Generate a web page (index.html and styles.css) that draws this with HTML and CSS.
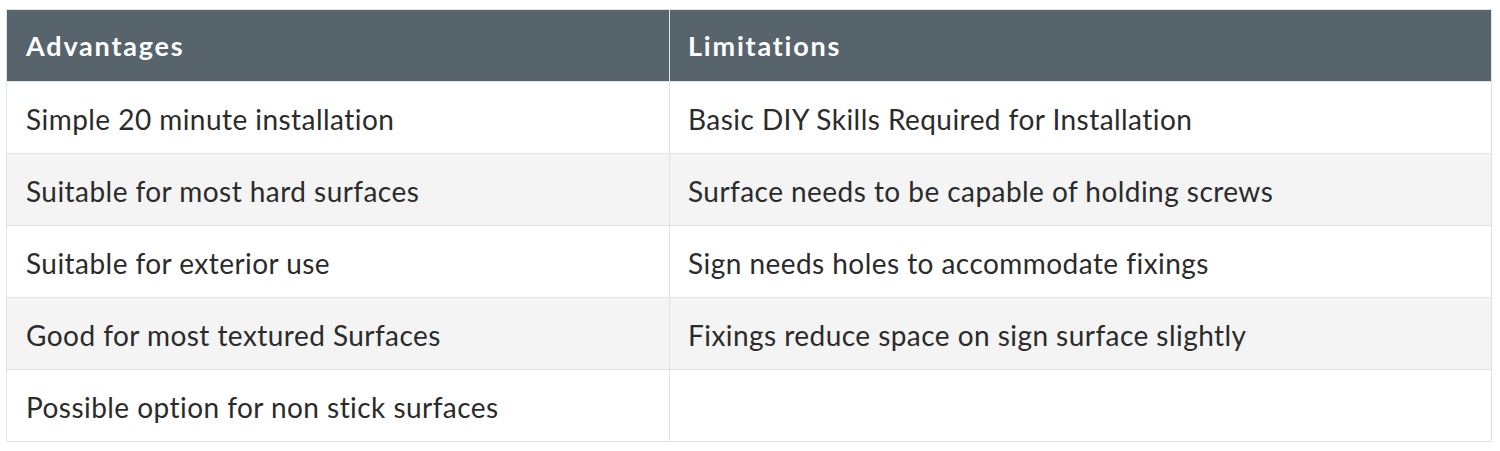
FILE: index.html
```html
<!DOCTYPE html>
<html>
<head>
<meta charset="utf-8">
<link rel="stylesheet" href="styles.css">
</head>
<body>
<table class="compare">
  <thead>
    <tr><th>Advantages</th><th>Limitations</th></tr>
  </thead>
  <tbody>
    <tr><td>Simple 20 minute installation</td><td>Basic DIY Skills Required for Installation</td></tr>
    <tr class="alt"><td>Suitable for most hard surfaces</td><td>Surface needs to be capable of holding screws</td></tr>
    <tr><td>Suitable for exterior use</td><td>Sign needs holes to accommodate fixings</td></tr>
    <tr class="alt"><td>Good for most textured Surfaces</td><td>Fixings reduce space on sign surface slightly</td></tr>
    <tr><td>Possible option for non stick surfaces</td><td></td></tr>
  </tbody>
</table>
</body>
</html>
```
FILE: styles.css
```css
html, body {
  margin: 0;
  background: #ffffff;
}
body {
  padding: 9px 8px 0 6px;
  font-family: Lato, "Noto Sans", sans-serif;
  color: #2b2b2b;
}
.compare {
  width: 1486px;
  border-collapse: collapse;
  table-layout: fixed;
  border: 1px solid #dfe3e8;
}
.compare th, .compare td {
  border: 1px solid #dfe3e8;
  padding: 0 19px;
  height: 71px;
  text-align: left;
  vertical-align: middle;
}
.compare th:first-child, .compare td:first-child {
  width: 624px;
}
.compare th + th, .compare td + td {
  padding-left: 18px;
}
.compare th {
  background: #58646c;
  color: #ffffff;
  font-size: 27px;
  font-weight: 700;
  letter-spacing: 1.8px;
}
.compare td {
  padding-top: 2px;
  height: 69px;
  font-size: 28px;
  font-weight: 400;
  letter-spacing: 0.45px;
}
.compare tr.alt td {
  background: #f4f4f4;
}
```
